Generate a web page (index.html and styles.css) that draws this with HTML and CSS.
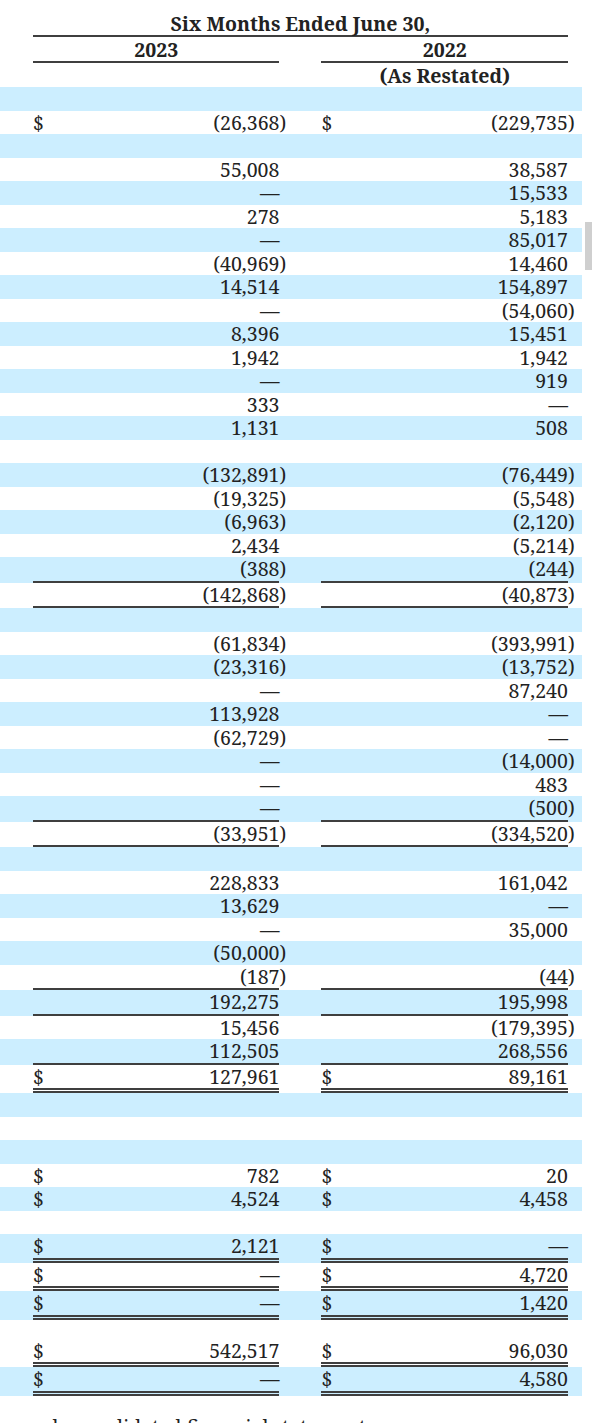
FILE: index.html
```html
<!DOCTYPE html>
<html>
<head>
<meta charset="utf-8">
<link rel="stylesheet" href="styles.css">
</head>
<body>
<div class="page">
<table class="fin">
<colgroup>
<col class="c-lead"><col class="c-dol"><col class="c-val"><col class="c-par"><col class="c-gap"><col class="c-dol"><col class="c-val"><col class="c-par">
</colgroup>
<thead>
<tr class="h-title"><th></th><th colspan="6" class="line">Six Months Ended June 30,</th><th></th></tr>
<tr class="h-year"><th></th><th colspan="2" class="line">2023</th><th></th><th></th><th colspan="2" class="line">2022</th><th></th></tr>
<tr class="h-rest"><th></th><th colspan="2"></th><th></th><th></th><th colspan="2">(As Restated)</th><th></th></tr>
</thead>
<tbody>
<tr class="b"><td></td><td class="d"></td><td class="v"></td><td class="p"></td><td></td><td class="d"></td><td class="v"></td><td class="p"></td></tr>
<tr><td></td><td class="d">$</td><td class="v">(26,368</td><td class="p">)</td><td></td><td class="d">$</td><td class="v">(229,735</td><td class="p">)</td></tr>
<tr class="b"><td></td><td class="d"></td><td class="v"></td><td class="p"></td><td></td><td class="d"></td><td class="v"></td><td class="p"></td></tr>
<tr><td></td><td class="d"></td><td class="v">55,008</td><td class="p"></td><td></td><td class="d"></td><td class="v">38,587</td><td class="p"></td></tr>
<tr class="b"><td></td><td class="d"></td><td class="v">—</td><td class="p"></td><td></td><td class="d"></td><td class="v">15,533</td><td class="p"></td></tr>
<tr><td></td><td class="d"></td><td class="v">278</td><td class="p"></td><td></td><td class="d"></td><td class="v">5,183</td><td class="p"></td></tr>
<tr class="b"><td></td><td class="d"></td><td class="v">—</td><td class="p"></td><td></td><td class="d"></td><td class="v">85,017</td><td class="p"></td></tr>
<tr><td></td><td class="d"></td><td class="v">(40,969</td><td class="p">)</td><td></td><td class="d"></td><td class="v">14,460</td><td class="p"></td></tr>
<tr class="b"><td></td><td class="d"></td><td class="v">14,514</td><td class="p"></td><td></td><td class="d"></td><td class="v">154,897</td><td class="p"></td></tr>
<tr><td></td><td class="d"></td><td class="v">—</td><td class="p"></td><td></td><td class="d"></td><td class="v">(54,060</td><td class="p">)</td></tr>
<tr class="b"><td></td><td class="d"></td><td class="v">8,396</td><td class="p"></td><td></td><td class="d"></td><td class="v">15,451</td><td class="p"></td></tr>
<tr><td></td><td class="d"></td><td class="v">1,942</td><td class="p"></td><td></td><td class="d"></td><td class="v">1,942</td><td class="p"></td></tr>
<tr class="b"><td></td><td class="d"></td><td class="v">—</td><td class="p"></td><td></td><td class="d"></td><td class="v">919</td><td class="p"></td></tr>
<tr><td></td><td class="d"></td><td class="v">333</td><td class="p"></td><td></td><td class="d"></td><td class="v">—</td><td class="p"></td></tr>
<tr class="b"><td></td><td class="d"></td><td class="v">1,131</td><td class="p"></td><td></td><td class="d"></td><td class="v">508</td><td class="p"></td></tr>
<tr><td></td><td class="d"></td><td class="v"></td><td class="p"></td><td></td><td class="d"></td><td class="v"></td><td class="p"></td></tr>
<tr class="b"><td></td><td class="d"></td><td class="v">(132,891</td><td class="p">)</td><td></td><td class="d"></td><td class="v">(76,449</td><td class="p">)</td></tr>
<tr><td></td><td class="d"></td><td class="v">(19,325</td><td class="p">)</td><td></td><td class="d"></td><td class="v">(5,548</td><td class="p">)</td></tr>
<tr class="b"><td></td><td class="d"></td><td class="v">(6,963</td><td class="p">)</td><td></td><td class="d"></td><td class="v">(2,120</td><td class="p">)</td></tr>
<tr><td></td><td class="d"></td><td class="v">2,434</td><td class="p"></td><td></td><td class="d"></td><td class="v">(5,214</td><td class="p">)</td></tr>
<tr class="b u"><td></td><td class="d"></td><td class="v">(388</td><td class="p">)</td><td></td><td class="d"></td><td class="v">(244</td><td class="p">)</td></tr>
<tr class="u"><td></td><td class="d"></td><td class="v">(142,868</td><td class="p">)</td><td></td><td class="d"></td><td class="v">(40,873</td><td class="p">)</td></tr>
<tr class="b"><td></td><td class="d"></td><td class="v"></td><td class="p"></td><td></td><td class="d"></td><td class="v"></td><td class="p"></td></tr>
<tr><td></td><td class="d"></td><td class="v">(61,834</td><td class="p">)</td><td></td><td class="d"></td><td class="v">(393,991</td><td class="p">)</td></tr>
<tr class="b"><td></td><td class="d"></td><td class="v">(23,316</td><td class="p">)</td><td></td><td class="d"></td><td class="v">(13,752</td><td class="p">)</td></tr>
<tr><td></td><td class="d"></td><td class="v">—</td><td class="p"></td><td></td><td class="d"></td><td class="v">87,240</td><td class="p"></td></tr>
<tr class="b"><td></td><td class="d"></td><td class="v">113,928</td><td class="p"></td><td></td><td class="d"></td><td class="v">—</td><td class="p"></td></tr>
<tr><td></td><td class="d"></td><td class="v">(62,729</td><td class="p">)</td><td></td><td class="d"></td><td class="v">—</td><td class="p"></td></tr>
<tr class="b"><td></td><td class="d"></td><td class="v">—</td><td class="p"></td><td></td><td class="d"></td><td class="v">(14,000</td><td class="p">)</td></tr>
<tr><td></td><td class="d"></td><td class="v">—</td><td class="p"></td><td></td><td class="d"></td><td class="v">483</td><td class="p"></td></tr>
<tr class="b u"><td></td><td class="d"></td><td class="v">—</td><td class="p"></td><td></td><td class="d"></td><td class="v">(500</td><td class="p">)</td></tr>
<tr class="u"><td></td><td class="d"></td><td class="v">(33,951</td><td class="p">)</td><td></td><td class="d"></td><td class="v">(334,520</td><td class="p">)</td></tr>
<tr class="b"><td></td><td class="d"></td><td class="v"></td><td class="p"></td><td></td><td class="d"></td><td class="v"></td><td class="p"></td></tr>
<tr><td></td><td class="d"></td><td class="v">228,833</td><td class="p"></td><td></td><td class="d"></td><td class="v">161,042</td><td class="p"></td></tr>
<tr class="b"><td></td><td class="d"></td><td class="v">13,629</td><td class="p"></td><td></td><td class="d"></td><td class="v">—</td><td class="p"></td></tr>
<tr><td></td><td class="d"></td><td class="v">—</td><td class="p"></td><td></td><td class="d"></td><td class="v">35,000</td><td class="p"></td></tr>
<tr class="b"><td></td><td class="d"></td><td class="v">(50,000</td><td class="p">)</td><td></td><td class="d"></td><td class="v"></td><td class="p"></td></tr>
<tr class="u"><td></td><td class="d"></td><td class="v">(187</td><td class="p">)</td><td></td><td class="d"></td><td class="v">(44</td><td class="p">)</td></tr>
<tr class="b u"><td></td><td class="d"></td><td class="v">192,275</td><td class="p"></td><td></td><td class="d"></td><td class="v">195,998</td><td class="p"></td></tr>
<tr><td></td><td class="d"></td><td class="v">15,456</td><td class="p"></td><td></td><td class="d"></td><td class="v">(179,395</td><td class="p">)</td></tr>
<tr class="b u"><td></td><td class="d"></td><td class="v">112,505</td><td class="p"></td><td></td><td class="d"></td><td class="v">268,556</td><td class="p"></td></tr>
<tr class="uu"><td></td><td class="d">$</td><td class="v">127,961</td><td class="p"></td><td></td><td class="d">$</td><td class="v">89,161</td><td class="p"></td></tr>
<tr class="b"><td></td><td class="d"></td><td class="v"></td><td class="p"></td><td></td><td class="d"></td><td class="v"></td><td class="p"></td></tr>
<tr><td></td><td class="d"></td><td class="v"></td><td class="p"></td><td></td><td class="d"></td><td class="v"></td><td class="p"></td></tr>
<tr class="b"><td></td><td class="d"></td><td class="v"></td><td class="p"></td><td></td><td class="d"></td><td class="v"></td><td class="p"></td></tr>
<tr><td></td><td class="d">$</td><td class="v">782</td><td class="p"></td><td></td><td class="d">$</td><td class="v">20</td><td class="p"></td></tr>
<tr class="b"><td></td><td class="d">$</td><td class="v">4,524</td><td class="p"></td><td></td><td class="d">$</td><td class="v">4,458</td><td class="p"></td></tr>
<tr><td></td><td class="d"></td><td class="v"></td><td class="p"></td><td></td><td class="d"></td><td class="v"></td><td class="p"></td></tr>
<tr class="b uu"><td></td><td class="d">$</td><td class="v">2,121</td><td class="p"></td><td></td><td class="d">$</td><td class="v">—</td><td class="p"></td></tr>
<tr class="uu"><td></td><td class="d">$</td><td class="v">—</td><td class="p"></td><td></td><td class="d">$</td><td class="v">4,720</td><td class="p"></td></tr>
<tr class="b uu"><td></td><td class="d">$</td><td class="v">—</td><td class="p"></td><td></td><td class="d">$</td><td class="v">1,420</td><td class="p"></td></tr>
<tr class="short"><td></td><td class="d"></td><td class="v"></td><td class="p"></td><td></td><td class="d"></td><td class="v"></td><td class="p"></td></tr>
<tr class="uu"><td></td><td class="d">$</td><td class="v">542,517</td><td class="p"></td><td></td><td class="d">$</td><td class="v">96,030</td><td class="p"></td></tr>
<tr class="b uu"><td></td><td class="d">$</td><td class="v">—</td><td class="p"></td><td></td><td class="d">$</td><td class="v">4,580</td><td class="p"></td></tr>
</tbody>
</table>
<p class="note">ed consolidated financial statements.</p>
<div class="scroll-thumb"></div>
</div>
</body>
</html>
```
FILE: styles.css
```css
html, body {
  margin: 0;
  padding: 0;
  background: #ffffff;
}

.page {
  position: relative;
  width: 592px;
  height: 1423px;
  overflow: hidden;
  font-family: "Noto Serif", "DejaVu Serif", serif;
  color: #222222;
}

.fin {
  border-collapse: separate;
  border-spacing: 0;
  table-layout: fixed;
  width: 582px;
  font-size: 19.5px;
}

.c-lead { width: 33px; }
.c-dol { width: 30px; }
.c-val { width: 216px; }
.c-par { width: 14px; }
.c-gap { width: 28px; }

.fin th {
  font-weight: bold;
  text-align: center;
  padding: 0;
  vertical-align: bottom;
  white-space: nowrap;
}

.h-title th {
  height: 35px;
  line-height: 22px;
}

.h-year th {
  height: 24px;
  line-height: 22px;
}

.h-rest th {
  height: 24px;
  line-height: 22px;
}

.fin th.line {
  border-bottom: 2px solid #3f3f3f;
}

.fin td {
  padding: 0;
  line-height: 23.5px;
  height: 23.5px;
  vertical-align: top;
  white-space: nowrap;
}

.fin .short td {
  height: 19px;
}

.b td {
  background: #cceeff;
}

.d {
  text-align: left;
}

.v {
  text-align: right;
}

.p {
  text-align: left;
}

.u .d, .u .v {
  border-bottom: 2px solid #3f3f3f;
}

.uu .d, .uu .v {
  border-bottom: 5px double #3f3f3f;
}

.note {
  margin: 20px 0 0 36px;
  font-size: 19.5px;
  line-height: 22px;
  color: #222222;
}

.scroll-thumb {
  position: absolute;
  left: 585px;
  top: 222px;
  width: 7px;
  height: 48px;
  background: #cfcfcf;
}
```
